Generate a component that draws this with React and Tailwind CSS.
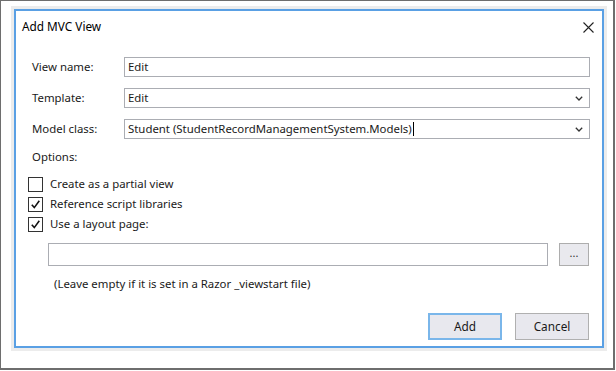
import React from "react";

const font = { fontFamily: '"Noto Sans", "Open Sans", sans-serif' };

function Chevron() {
  return (
    <svg width="8" height="5" viewBox="0 0 8 5" className="shrink-0">
      <path d="M0.8 0.8 L4 4 L7.2 0.8" fill="none" stroke="#333" strokeWidth="1.3" />
    </svg>
  );
}

function Check() {
  return (
    <svg width="11" height="11" viewBox="0 0 11 11">
      <path d="M1.8 5.8 L4.3 8.6 L9.3 1.8" fill="none" stroke="#111" strokeWidth="1.6" />
    </svg>
  );
}

function CheckRow({ checked, label }) {
  return (
    <div className="flex items-center h-[20px]">
      <div className="w-[15px] h-[15px] border border-[#333] bg-white flex items-center justify-center">
        {checked && <Check />}
      </div>
      <span className="ml-[7px] text-[11.4px] text-[#1a1a1a]">{label}</span>
    </div>
  );
}

export default function App() {
  return (
    <div className="w-[616px] h-[371px] bg-white" style={font}>
      <div className="w-[615px] h-[370px] border-l border-t border-r-2 border-b-2 border-[#6e6e6e] pl-[10px] pt-[5px]">
        <div className="w-[596px] h-[345px] p-[3px] bg-[#ececec]">
          <div className="w-[590px] h-[339px] border-2 border-[#5aa0e4] bg-white flex flex-col">
            {/* title bar */}
            <div className="h-[30px] flex items-center justify-between pl-[6px] pr-[8px] pt-[2px]">
              <span className="text-[11.8px] text-black">Add MVC View</span>
              <svg width="11" height="11" viewBox="0 0 11 11">
                <path d="M0.5 0.5 L10.5 10.5 M10.5 0.5 L0.5 10.5" stroke="#222" strokeWidth="1.1" />
              </svg>
            </div>

            <div className="flex flex-col pl-[16px] pr-[12px] pt-[16px]">
              {/* view name */}
              <div className="flex items-center h-[20px]">
                <span className="w-[92px] text-[11.4px] text-[#1a1a1a]">View name:</span>
                <div className="flex-1 h-[20px] border border-[#abadb3] flex items-center pl-[3px] text-[11.4px] text-[#1a1a1a]">
                  Edit
                </div>
              </div>
              {/* template */}
              <div className="flex items-center h-[20px] mt-[11px]">
                <span className="w-[92px] text-[11.4px] text-[#1a1a1a]">Template:</span>
                <div className="flex-1 h-[20px] border border-[#abadb3] flex items-center justify-between pl-[3px] pr-[6px] text-[11.4px] text-[#1a1a1a]">
                  <span>Edit</span>
                  <Chevron />
                </div>
              </div>
              {/* model class */}
              <div className="flex items-center h-[20px] mt-[11px]">
                <span className="w-[92px] text-[11.4px] text-[#1a1a1a]">Model class:</span>
                <div className="flex-1 h-[20px] border border-[#abadb3] flex items-center justify-between pl-[3px] pr-[6px] text-[11.4px] text-[#1a1a1a]">
                  <span className="flex items-center">
                    Student (StudentRecordManagementSystem.Models)
                    <span className="inline-block w-px h-[14px] bg-black ml-[1px]" />
                  </span>
                  <Chevron />
                </div>
              </div>

              <div className="mt-[10px] h-[16px] flex items-center text-[11.4px] text-[#1a1a1a]">Options:</div>

              <div className="flex flex-col mt-[9px] -ml-[4px]">
                <CheckRow checked={false} label="Create as a partial view" />
                <CheckRow checked={true} label="Reference script libraries" />
                <CheckRow checked={true} label="Use a layout page:" />
              </div>

              <div className="flex items-center mt-[9px] pl-[16px]">
                <div className="w-[500px] h-[23px] border border-[#abadb3] bg-white" />
                <div className="ml-[11px] w-[30px] h-[23px] border border-[#adadad] bg-[#e9e9ee] flex items-center justify-center text-[11px] text-[#333] leading-none pb-[4px]">
                  ...
                </div>
              </div>

              <div className="mt-[10px] pl-[22px] h-[16px] flex items-center text-[11.4px] text-[#1a1a1a]">
                (Leave empty if it is set in a Razor _viewstart file)
              </div>

              <div className="flex justify-end gap-[13px] mt-[21px] pr-[1px]">
                <div className="w-[74px] h-[27px] border-2 border-[#7ab6ea] bg-[#e8e8ee] flex items-center justify-center text-[11.8px] text-[#1a1a1a]">
                  Add
                </div>
                <div className="w-[74px] h-[27px] border border-[#b0b0b0] bg-[#e8e8ee] flex items-center justify-center text-[11.8px] text-[#1a1a1a]">
                  Cancel
                </div>
              </div>
            </div>
          </div>
        </div>
      </div>
    </div>
  );
}
